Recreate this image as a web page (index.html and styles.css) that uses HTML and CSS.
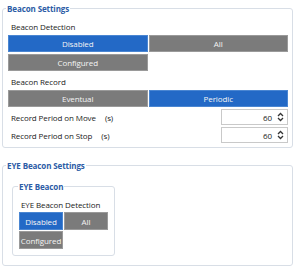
FILE: index.html
```html
<!DOCTYPE html>
<html lang="en">
<head>
    <meta charset="UTF-8">
    <title>Beacon Settings</title>
    <link rel="stylesheet" href="styles.css">
</head>
<body>
    <!-- Beacon settings -->
    <fieldset class="group">
        <legend>Beacon Settings</legend>
        <div class="field-label">Beacon Detection</div>
        <div class="toggle-grid">
            <button class="toggle active">Disabled</button>
            <button class="toggle">All</button>
            <button class="toggle">Configured</button>
        </div>
        <div class="field-label short">Beacon Record</div>
        <div class="toggle-grid">
            <button class="toggle">Eventual</button>
            <button class="toggle active">Periodic</button>
        </div>
        <div class="num-row">
            <span class="num-label">Record Period on Move <span class="unit">(s)</span></span>
            <div class="spin">
                <span class="spin-value">60</span>
                <svg class="spin-arrows" width="7" height="10" viewBox="0 0 7 10">
                    <path d="M1 4 L3.5 1.5 L6 4" fill="none" stroke="#333" stroke-width="1.3"/>
                    <path d="M1 6 L3.5 8.5 L6 6" fill="none" stroke="#333" stroke-width="1.3"/>
                </svg>
            </div>
        </div>
        <div class="num-row">
            <span class="num-label">Record Period on Stop <span class="unit">(s)</span></span>
            <div class="spin">
                <span class="spin-value">60</span>
                <svg class="spin-arrows" width="7" height="10" viewBox="0 0 7 10">
                    <path d="M1 4 L3.5 1.5 L6 4" fill="none" stroke="#333" stroke-width="1.3"/>
                    <path d="M1 6 L3.5 8.5 L6 6" fill="none" stroke="#333" stroke-width="1.3"/>
                </svg>
            </div>
        </div>
    </fieldset>

    <!-- EYE beacon settings -->
    <fieldset class="group eye">
        <legend>EYE Beacon Settings</legend>
        <fieldset class="group inner">
            <legend>EYE Beacon</legend>
            <div class="field-label">EYE Beacon Detection</div>
            <div class="toggle-grid small">
                <button class="toggle active">Disabled</button>
                <button class="toggle">All</button>
                <button class="toggle">Configured</button>
            </div>
        </fieldset>
    </fieldset>
</body>
</html>
```

FILE: styles.css
```css
* {
    box-sizing: border-box;
}

body {
    margin: 0;
    padding-top: 3px;
    background-color: #fff;
    font-family: "Open Sans", "Noto Sans", Arial, sans-serif;
    font-size: 8px;
    letter-spacing: -0.1px;
    color: #222;
}

.group {
    margin: 0 7px 0 2px;
    padding: 0 4px 4px 5px;
    border: 1px solid #d8dee6;
    border-radius: 3px;
}

.group legend {
    margin-left: -2px;
    padding: 0 1px;
    line-height: 11px;
    font-weight: bold;
    color: #2c5ca6;
}

.field-label {
    height: 21px;
    padding: 7px 0 0 3px;
    line-height: 12px;
}

.field-label.short {
    height: 19px;
    padding-top: 5px;
}

.toggle-grid {
    display: grid;
    grid-template-columns: 1fr 1fr;
    grid-auto-rows: 17px;
    gap: 2px 1px;
}

.toggle {
    margin: 0;
    padding: 0;
    border: 1px solid #9a9a9a;
    background-color: #7b7b7b;
    color: #f4f4f4;
    font-family: inherit;
    font-size: 8px;
    letter-spacing: -0.1px;
}

.toggle.active {
    border-color: #4a86d2;
    background-color: #2369c6;
}

.num-row {
    display: flex;
    align-items: center;
    justify-content: space-between;
    height: 16px;
    margin-top: 2px;
}

.num-label {
    padding-left: 3px;
}

.unit {
    margin-left: 7px;
}

.spin {
    display: flex;
    align-items: center;
    justify-content: flex-end;
    width: 67px;
    height: 16px;
    padding-right: 3px;
    border: 1px solid #c9c9c9;
    background-color: #fff;
}

.spin-value {
    margin-right: 5px;
}

/* second block */
.eye {
    margin-top: 12px;
    padding: 10px 4px 9px 9px;
}

.eye > legend {
    margin-left: -6px;
}

.inner {
    width: 103px;
    margin: 0;
    padding: 0 5px 6px 6px;
}

.inner legend {
    margin-left: -1px;
}

.inner .field-label {
    height: 20px;
    padding-left: 2px;
}

.toggle-grid.small {
    grid-template-columns: 44px 44px;
    grid-auto-rows: 18px;
    gap: 1px;
}
```
